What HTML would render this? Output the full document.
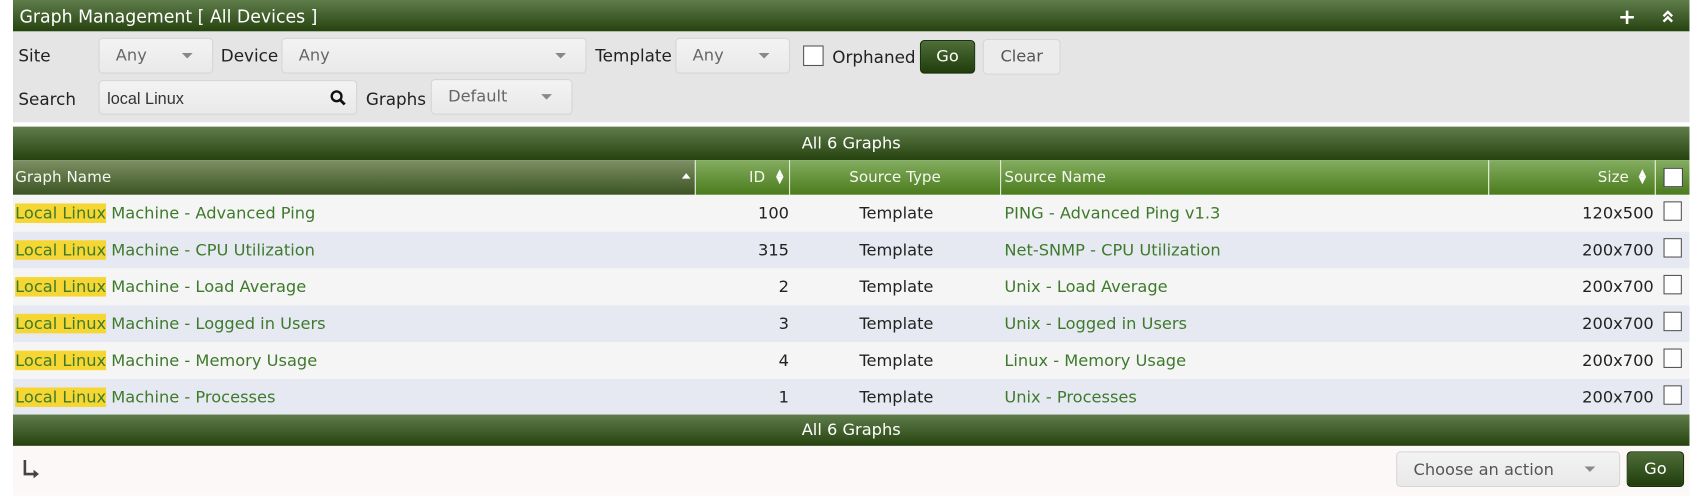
<!DOCTYPE html>
<html><head><meta charset="utf-8"><style>
html,body{margin:0;padding:0;background:#fff;width:1697px;height:496px;overflow:hidden}
#w{position:absolute;left:0;top:0;width:1568px;height:458px;transform:scale(1.0823);transform-origin:0 0;font-family:"DejaVu Sans","Liberation Sans",sans-serif;font-size:14px;color:#222}
.a{position:absolute}
.bar{background:linear-gradient(#5f7d4a,#25420f);color:#fff}
.dd{position:absolute;background:linear-gradient(#f3f3f3,#e9e9e9);border:1px solid #d6d6d6;border-radius:4px;box-sizing:border-box;color:#666;font-size:15px;line-height:31px;padding-left:15px}
.dd i{position:absolute;right:18px;top:13px;border-left:5px solid transparent;border-right:5px solid transparent;border-top:5px solid #888}
.lbl{position:absolute;font-size:15.5px;color:#222}
.hd{position:absolute;top:148px;height:32px;line-height:33px;color:#f4f8ee;font-size:14px;background:linear-gradient(#84ad60,#4a7b1b);box-sizing:border-box;border-right:1px solid #dfe8d4}
.row{position:absolute;left:12px;width:1549px;height:34px;line-height:34px;font-size:15px}
.row span{position:absolute}
.g{color:#3e7a2c}
.hl{background:#f5d633;color:#3e7a2c}
.cb{position:absolute;width:17px;height:17px;border:1px solid #555;background:#fff;box-sizing:border-box}
.srt{position:absolute;top:157px;color:#fff;font-size:9px;line-height:7px}
</style></head><body><div id="w">
<div class="a bar" style="left:12px;top:0;width:1549px;height:29px"></div>
<div class="a" style="left:18px;top:6px;color:#fff;font-size:16px">Graph Management [ All Devices ]</div>
<div class="a" style="left:1495px;top:5px;color:#fff;font-size:20px;font-weight:bold;line-height:20px">+</div>
<svg class="a" style="left:1535px;top:9px" width="12" height="12" viewBox="0 0 12 12"><path d="M2 6 L6 2 L10 6 M2 11 L6 7 L10 11" stroke="#fff" stroke-width="2.2" fill="none"/></svg>
<div class="a" style="left:12px;top:29px;width:1549px;height:84px;background:#e5e5e5"></div>
<div class="lbl" style="left:17px;top:43px">Site</div>
<div class="dd" style="left:91px;top:35px;width:106px;height:33px">Any<i></i></div>
<div class="lbl" style="left:204px;top:43px">Device</div>
<div class="dd" style="left:260px;top:35px;width:282px;height:33px">Any<i></i></div>
<div class="lbl" style="left:550px;top:43px">Template</div>
<div class="dd" style="left:624px;top:35px;width:106px;height:33px">Any<i></i></div>
<div class="cb" style="left:742px;top:42px;width:19px;height:19px"></div>
<div class="lbl" style="left:769px;top:44px">Orphaned</div>
<div class="a" style="left:850px;top:37px;width:51px;height:31px;border-radius:4px;background:linear-gradient(#4e6d37,#203d0c);border:1px solid #1a300a;box-sizing:border-box;color:#fff;text-align:center;line-height:29px;font-size:15px">Go</div>
<div class="a" style="left:908px;top:36px;width:72px;height:33px;border-radius:4px;background:#ececec;border:1px solid #d6d6d6;box-sizing:border-box;color:#555;text-align:center;line-height:31px;font-size:15px">Clear</div>
<div class="lbl" style="left:17px;top:83px">Search</div>
<div class="dd" style="left:91px;top:74px;width:239px;height:32px;color:#333;padding-left:7px;line-height:33px;font-family:'Liberation Sans',sans-serif">local Linux</div>
<svg class="a" style="left:305px;top:83px" width="15" height="15" viewBox="0 0 15 15"><circle cx="6" cy="6" r="4.5" stroke="#111" stroke-width="2.2" fill="none"/><path d="M9.5 9.5 L13.5 13.5" stroke="#111" stroke-width="2.6"/></svg>
<div class="lbl" style="left:338px;top:83px">Graphs</div>
<div class="dd" style="left:398px;top:73px;width:131px;height:33px">Default<i></i></div>
<div class="a bar" style="left:12px;top:117px;width:1549px;height:31px;text-align:center;line-height:31px;font-size:15px">All 6 Graphs</div>
<div class="hd" style="left:12px;width:631px;background:linear-gradient(#7d9063,#3b5323);padding-left:2px">Graph Name<i style="position:absolute;right:4px;top:12px;border-left:4px solid transparent;border-right:4px solid transparent;border-bottom:5px solid #fff"></i></div>
<div class="hd" style="left:643px;width:87px;text-align:right;padding-right:22px">ID</div>
<div class="srt" style="left:717px">&#9650;<br>&#9660;</div>
<div class="hd" style="left:730px;width:195px;text-align:center">Source Type</div>
<div class="hd" style="left:925px;width:451px;padding-left:3px">Source Name</div>
<div class="hd" style="left:1376px;width:154px;text-align:right;padding-right:24px">Size</div>
<div class="srt" style="left:1514px">&#9650;<br>&#9660;</div>
<div class="hd" style="left:1530px;width:31px;border-right:0"></div>
<div class="cb" style="left:1537px;top:155px;width:18px;height:18px;border-color:#444"></div>

<div class="row" style="top:180px;background:#f5f5f5"><span style="left:2px"><span class="hl" style="position:static">Local Linux</span><span class="g" style="position:static"> Machine - Advanced Ping</span></span><span style="right:832px">100</span><span style="left:782px">Template</span><span class="g" style="left:916px">PING - Advanced Ping v1.3</span><span style="right:33px">120x500</span></div>
<div class="row" style="top:214px;background:#e6e9f2"><span style="left:2px"><span class="hl" style="position:static">Local Linux</span><span class="g" style="position:static"> Machine - CPU Utilization</span></span><span style="right:832px">315</span><span style="left:782px">Template</span><span class="g" style="left:916px">Net-SNMP - CPU Utilization</span><span style="right:33px">200x700</span></div>
<div class="row" style="top:248px;background:#f5f5f5"><span style="left:2px"><span class="hl" style="position:static">Local Linux</span><span class="g" style="position:static"> Machine - Load Average</span></span><span style="right:832px">2</span><span style="left:782px">Template</span><span class="g" style="left:916px">Unix - Load Average</span><span style="right:33px">200x700</span></div>
<div class="row" style="top:282px;background:#e6e9f2"><span style="left:2px"><span class="hl" style="position:static">Local Linux</span><span class="g" style="position:static"> Machine - Logged in Users</span></span><span style="right:832px">3</span><span style="left:782px">Template</span><span class="g" style="left:916px">Unix - Logged in Users</span><span style="right:33px">200x700</span></div>
<div class="row" style="top:316px;background:#f5f5f5"><span style="left:2px"><span class="hl" style="position:static">Local Linux</span><span class="g" style="position:static"> Machine - Memory Usage</span></span><span style="right:832px">4</span><span style="left:782px">Template</span><span class="g" style="left:916px">Linux - Memory Usage</span><span style="right:33px">200x700</span></div>
<div class="row" style="top:350px;height:33px;background:#e6e9f2"><span style="left:2px"><span class="hl" style="position:static">Local Linux</span><span class="g" style="position:static"> Machine - Processes</span></span><span style="right:832px">1</span><span style="left:782px">Template</span><span class="g" style="left:916px">Unix - Processes</span><span style="right:33px">200x700</span></div>
<div class="cb" style="left:1537px;top:186px;height:18px"></div>
<div class="cb" style="left:1537px;top:220px;height:18px"></div>
<div class="cb" style="left:1537px;top:254px;height:18px"></div>
<div class="cb" style="left:1537px;top:288px;height:18px"></div>
<div class="cb" style="left:1537px;top:322px;height:18px"></div>
<div class="cb" style="left:1537px;top:356px;height:18px"></div>

<div class="a bar" style="left:12px;top:383px;width:1549px;height:29px;text-align:center;line-height:29px;font-size:15px">All 6 Graphs</div>
<div class="a" style="left:12px;top:412px;width:1549px;height:46px;background:#fdf8f8"></div>
<svg class="a" style="left:20px;top:424px" width="18" height="18" viewBox="0 0 18 18"><path d="M3 1 V14 H12" stroke="#444" stroke-width="2.4" fill="none"/><path d="M11 10 L16 14 L11 18 Z" fill="#444"/></svg>
<div class="dd" style="left:1290px;top:417px;width:207px;height:33px;line-height:32px;color:#555">Choose an action<i style="right:22px"></i></div>
<div class="a" style="left:1503px;top:417px;width:53px;height:33px;border-radius:4px;background:linear-gradient(#4e6d37,#203d0c);border:1px solid #1a300a;box-sizing:border-box;color:#fff;text-align:center;line-height:31px;font-size:15px">Go</div>
</div></body></html>
